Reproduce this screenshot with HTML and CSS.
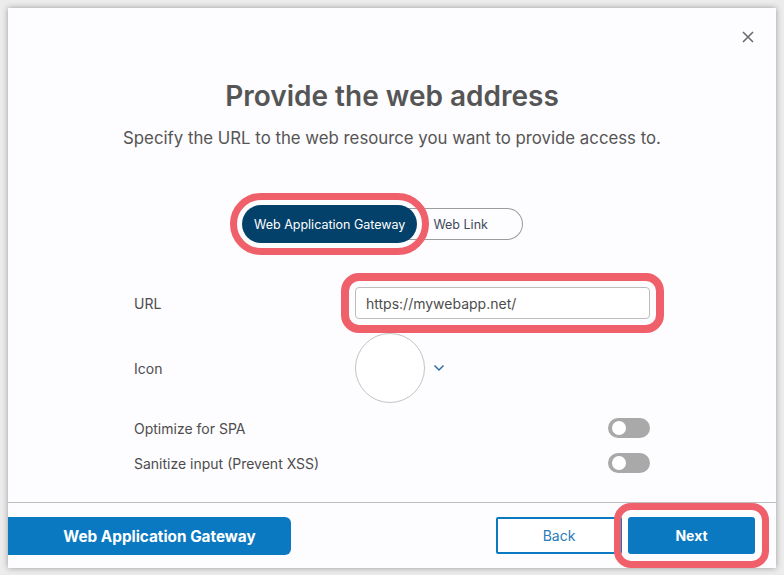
FILE: index.html
```html
<!DOCTYPE html>
<html lang="en">
<head>
    <meta charset="UTF-8">
    <meta name="viewport" content="width=device-width, initial-scale=1.0">
    <title>Provide the web address</title>
    <link rel="stylesheet" href="styles.css">
</head>
<body>
    <div class="dialog">
        <div class="dialog-top">
            <button class="close-btn" type="button" aria-label="Close">
                <svg width="14" height="14" viewBox="0 0 14 14"><path d="M2 2 L12 12 M12 2 L2 12" stroke="#6b6b6b" stroke-width="1.6" fill="none"/></svg>
            </button>
        </div>

        <h2 class="title">Provide the web address</h2>
        <p class="subtitle">Specify the URL to the web resource you want to provide access to.</p>

        <div class="form-body">
            <div class="segment">
                <button class="seg-btn active marked" type="button">Web Application Gateway</button>
                <button class="seg-btn" type="button">Web Link</button>
            </div>

            <div class="row row-url">
                <label for="url">URL</label>
                <input type="text" id="url" class="text-input marked-field" value="https://mywebapp.net/">
            </div>

            <div class="row row-icon">
                <label>Icon</label>
                <div class="icon-picker">
                    <div class="icon-circle"></div>
                    <svg class="chevron" width="12" height="8" viewBox="0 0 12 8"><polyline points="1.5,1.5 6,6 10.5,1.5" stroke="#2f6fa6" stroke-width="1.5" fill="none"/></svg>
                </div>
            </div>

            <div class="row row-switch">
                <label>Optimize for SPA</label>
                <span class="switch"><span class="knob"></span></span>
            </div>

            <div class="row row-switch">
                <label>Sanitize input (Prevent XSS)</label>
                <span class="switch"><span class="knob"></span></span>
            </div>
        </div>

        <div class="dialog-footer">
            <button class="btn-type" type="button">Web Application Gateway</button>
            <div class="footer-actions">
                <button class="btn-back" type="button">Back</button>
                <button class="btn-next marked-next" type="button">Next</button>
            </div>
        </div>
    </div>
</body>
</html>
```

FILE: styles.css
```css
/* Dialog styling */
body {
    font-family: Inter, "Noto Sans", Arial, sans-serif;
    background-color: #ececec;
    margin: 0;
    padding: 8px;
    color: #4d4d4d;
}

button {
    font-family: inherit;
    cursor: pointer;
}

.dialog {
    width: 768px;
    height: 560px;
    background-color: #fdfcfe;
    box-shadow: 0 0 6px rgba(0, 0, 0, 0.35);
    display: flex;
    flex-direction: column;
}

.dialog-top {
    display: flex;
    justify-content: flex-end;
    padding: 14px 13px 0 0;
}

.close-btn {
    width: 30px;
    height: 30px;
    border: none;
    background: none;
    padding: 0;
    display: flex;
    align-items: center;
    justify-content: center;
}

.title {
    margin: 27px 0 0;
    font-size: 28px;
    line-height: 34px;
    font-weight: 600;
    text-align: center;
    color: #555555;
}

.subtitle {
    margin: 13px 0 0;
    font-size: 16.8px;
    line-height: 24px;
    text-align: center;
    color: #555555;
}

.form-body {
    width: 516px;
    margin: 54px 0 0 126px;
}

/* segmented switch */
.segment {
    display: inline-flex;
    align-items: center;
    height: 30px;
    margin: 4px 0 4px 108px;
    border: 1px solid #9c9c9c;
    border-left-color: transparent;
    border-radius: 16px;
}

.seg-btn {
    border: none;
    background: none;
    font-size: 12.5px;
    color: #3d4a5a;
    padding: 0 34px 0 16px;
    height: 28px;
}

.seg-btn.active {
    height: 38px;
    margin: -4px 0 -4px -1px;
    padding: 0 12px;
    background-color: #04416a;
    color: #ffffff;
    border-radius: 19px;
}

.marked {
    outline: 7px solid #f0606a;
    outline-offset: 5px;
}

.row {
    display: flex;
    align-items: center;
}

.row label {
    width: 221px;
    font-size: 14px;
    color: #4d4d4d;
}

.row-url {
    margin-top: 43px;
}

.text-input {
    width: 295px;
    height: 32px;
    box-sizing: border-box;
    border: 1px solid #bdbdbd;
    border-radius: 4px;
    padding: 0 10px;
    font-family: inherit;
    font-size: 14px;
    color: #4d4d4d;
    background-color: #ffffff;
}

.marked-field {
    outline: 8px solid #f0606a;
    outline-offset: 6px;
}

.row-icon {
    margin-top: 14px;
}

.icon-picker {
    display: flex;
    align-items: center;
}

.icon-circle {
    width: 68px;
    height: 68px;
    border: 1px solid #c4c4c4;
    border-radius: 50%;
    background-color: #ffffff;
}

.chevron {
    margin-left: 8px;
}

.row-switch {
    justify-content: space-between;
    height: 20px;
    margin-top: 15px;
}

.switch {
    width: 42px;
    height: 20px;
    border-radius: 10px;
    background-color: #a9a9a9;
    display: flex;
    align-items: center;
}

.knob {
    width: 14px;
    height: 14px;
    margin-left: 4px;
    border-radius: 50%;
    background-color: #ffffff;
}

/* footer */
.dialog-footer {
    margin-top: auto;
    height: 66px;
    border-top: 1px solid #bdbdbd;
    display: flex;
    justify-content: space-between;
    padding-top: 14px;
    box-sizing: border-box;
}

.btn-type {
    width: 283px;
    height: 38px;
    border: none;
    border-radius: 0 6px 6px 0;
    padding: 0 0 0 20px;
    background-color: #0a79c1;
    color: #ffffff;
    font-size: 15.3px;
    font-weight: 700;
}

.footer-actions {
    display: flex;
    gap: 6px;
    padding-right: 21px;
}

.btn-back {
    width: 126px;
    height: 37px;
    border: 2px solid #0a79c1;
    border-radius: 2px;
    background-color: #ffffff;
    color: #2a7cb8;
    font-size: 14px;
}

.btn-next {
    width: 127px;
    height: 37px;
    border: none;
    border-radius: 3px;
    background-color: #0a79c1;
    color: #ffffff;
    font-size: 14px;
    font-weight: 700;
}

.marked-next {
    outline: 7px solid #f0606a;
    outline-offset: 7px;
}
```
